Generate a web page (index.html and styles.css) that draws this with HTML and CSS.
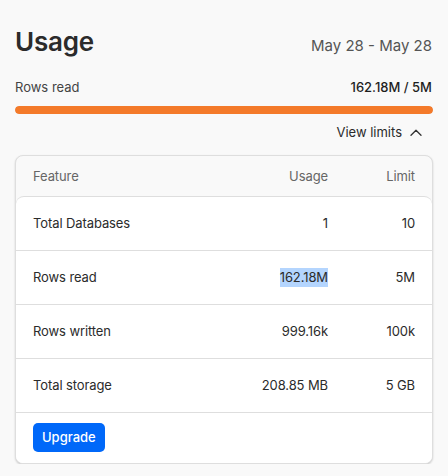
FILE: index.html
```html
<!DOCTYPE html>
<html lang="en">

<head>
    <meta charset="UTF-8">
    <meta name="viewport" content="width=device-width, initial-scale=1.0">
    <title>Usage</title>
    <link rel="stylesheet" href="styles.css">
</head>

<body>
    <div class="usage">
        <div class="usage-header">
            <h1 class="usage-title">Usage</h1>
            <span class="usage-range">May 28 - May 28</span>
        </div>

        <div class="meter">
            <div class="meter-labels">
                <span>Rows read</span>
                <strong>162.18M / 5M</strong>
            </div>
            <div class="meter-track">
                <div class="meter-fill" style="width: 100%"></div>
            </div>
        </div>

        <div class="limits-toggle">
            <button class="toggle-button" type="button">
                View limits
                <svg width="12" height="7" viewBox="0 0 12 7" fill="none">
                    <path d="M1 6.2L6 1.2L11 6.2" stroke="#333" stroke-width="1.3" stroke-linecap="round" stroke-linejoin="round" />
                </svg>
            </button>
        </div>

        <div class="limits-card">
            <div class="limits-row limits-head">
                <span>Feature</span>
                <span class="num">Usage</span>
                <span class="num">Limit</span>
            </div>

            <div class="limits-body">
                <div class="limits-row">
                    <span>Total Databases</span>
                    <span class="num">1</span>
                    <span class="num">10</span>
                </div>
                <div class="limits-row">
                    <span>Rows read</span>
                    <span class="num"><span class="selected">162.18M</span></span>
                    <span class="num">5M</span>
                </div>
                <div class="limits-row">
                    <span>Rows written</span>
                    <span class="num">999.16k</span>
                    <span class="num">100k</span>
                </div>
                <div class="limits-row">
                    <span>Total storage</span>
                    <span class="num">208.85 MB</span>
                    <span class="num">5 GB</span>
                </div>

                <div class="limits-footer">
                    <button class="upgrade-button" type="button">Upgrade</button>
                </div>
            </div>
        </div>
    </div>
</body>

</html>
```

FILE: styles.css
```css
body {
    margin: 0;
    background: #f9f9f9;
    font-family: Inter, "Noto Sans", sans-serif;
    color: #2b2b2b;
}

.usage {
    padding: 26px 15px 0;
}

.usage-header {
    display: flex;
    justify-content: space-between;
    align-items: baseline;
}

.usage-title {
    margin: 0;
    font-size: 26px;
    line-height: 32px;
    font-weight: 600;
    letter-spacing: -0.2px;
}

.usage-range {
    font-size: 15px;
    color: #555;
    margin-right: 1px;
}

/* Rows read meter */
.meter {
    margin-top: 19px;
}

.meter-labels {
    display: flex;
    justify-content: space-between;
    font-size: 13px;
    line-height: 20px;
    color: #444;
}

.meter-labels strong {
    font-weight: 500;
    color: #1e1e1e;
    margin-right: 1px;
}

.meter-track {
    margin-top: 9px;
    height: 8px;
    border-radius: 4px;
    background: #e6e6e6;
    overflow: hidden;
}

.meter-fill {
    height: 100%;
    background: #f47a2a;
    border-radius: 4px;
}

.limits-toggle {
    display: flex;
    justify-content: flex-end;
    margin-top: 8px;
}

.toggle-button {
    display: flex;
    align-items: center;
    gap: 8px;
    padding: 0 11px 0 0;
    border: 0;
    background: none;
    font-family: inherit;
    font-size: 13px;
    line-height: 20px;
    color: #2b2b2b;
}

/* Limits table */
.limits-card {
    margin-top: 13px;
    border: 1px solid #dedede;
    border-radius: 8px;
    background: #f9f9f9;
    box-shadow: 0 1px 2px rgba(0, 0, 0, 0.18);
}

.limits-row {
    display: grid;
    grid-template-columns: 1fr 120px 87px;
    padding: 16px 17px 17px;
    font-size: 13px;
    line-height: 20px;
    letter-spacing: -0.1px;
    border-bottom: 1px solid #dedede;
}

.limits-head {
    padding: 10px 17px;
    color: #666;
    border-bottom: 0;
}

.limits-body {
    background: #fff;
    border-top: 1px solid #dedede;
    border-radius: 8px 8px 7px 7px;
}

.num {
    text-align: right;
}

.selected {
    display: inline-block;
    line-height: 19px;
    background: #b4d5fe;
}

.limits-footer {
    padding: 10px 17px 11px;
}

.upgrade-button {
    padding: 4px 9px;
    border: 0;
    border-radius: 5px;
    background: #0068f9;
    color: #fff;
    font-family: inherit;
    font-size: 13px;
    font-weight: 500;
    line-height: 21px;
}
```
